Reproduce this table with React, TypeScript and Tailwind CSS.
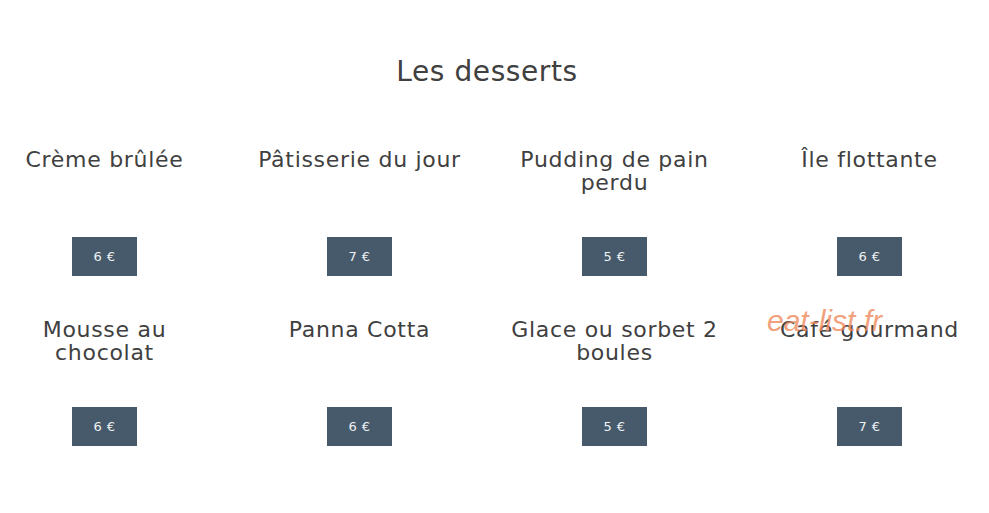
const desserts = [
  { name: 'Crème brûlée', price: '6 €' },
  { name: 'Pâtisserie du jour', price: '7 €' },
  { name: 'Pudding de pain perdu', price: '5 €' },
  { name: 'Île flottante', price: '6 €' },
  { name: 'Mousse au chocolat', price: '6 €' },
  { name: 'Panna Cotta', price: '6 €' },
  { name: 'Glace ou sorbet 2 boules', price: '5 €' },
  { name: 'Café gourmand', price: '7 €' },
]

export default function App() {
  return (
    <div className="relative w-[989px] h-[513px] overflow-hidden bg-white text-[#404040] font-['DejaVu_Sans',sans-serif]">
      <div className="w-[974px] pt-[55px]">
        <h2 className="text-center text-[28px] leading-[34px] tracking-[0.6px] font-normal">Les desserts</h2>

        <div className="mt-[59px] ml-[-23px] w-[1020px] grid grid-cols-4 gap-y-[42px]">
          {desserts.map((d) => (
            <div key={d.name} className="flex flex-col items-center">
              <div className="h-[89px] w-[215px] text-center text-[22px] leading-[23px] tracking-[0.7px]">{d.name}</div>
              <div className="w-[65px] h-[39px] bg-[#465a6b] flex items-center justify-center text-[13px] tracking-[0.5px] text-[#eef1f3]">
                {d.price}
              </div>
            </div>
          ))}
        </div>
      </div>

      {/* watermark */}
      <div className="absolute left-[767px] top-[298px] text-[30px] italic text-[#f08a5d] opacity-80 font-['Liberation_Sans',sans-serif] pointer-events-none">
        eat-list.fr
      </div>
    </div>
  )
}
